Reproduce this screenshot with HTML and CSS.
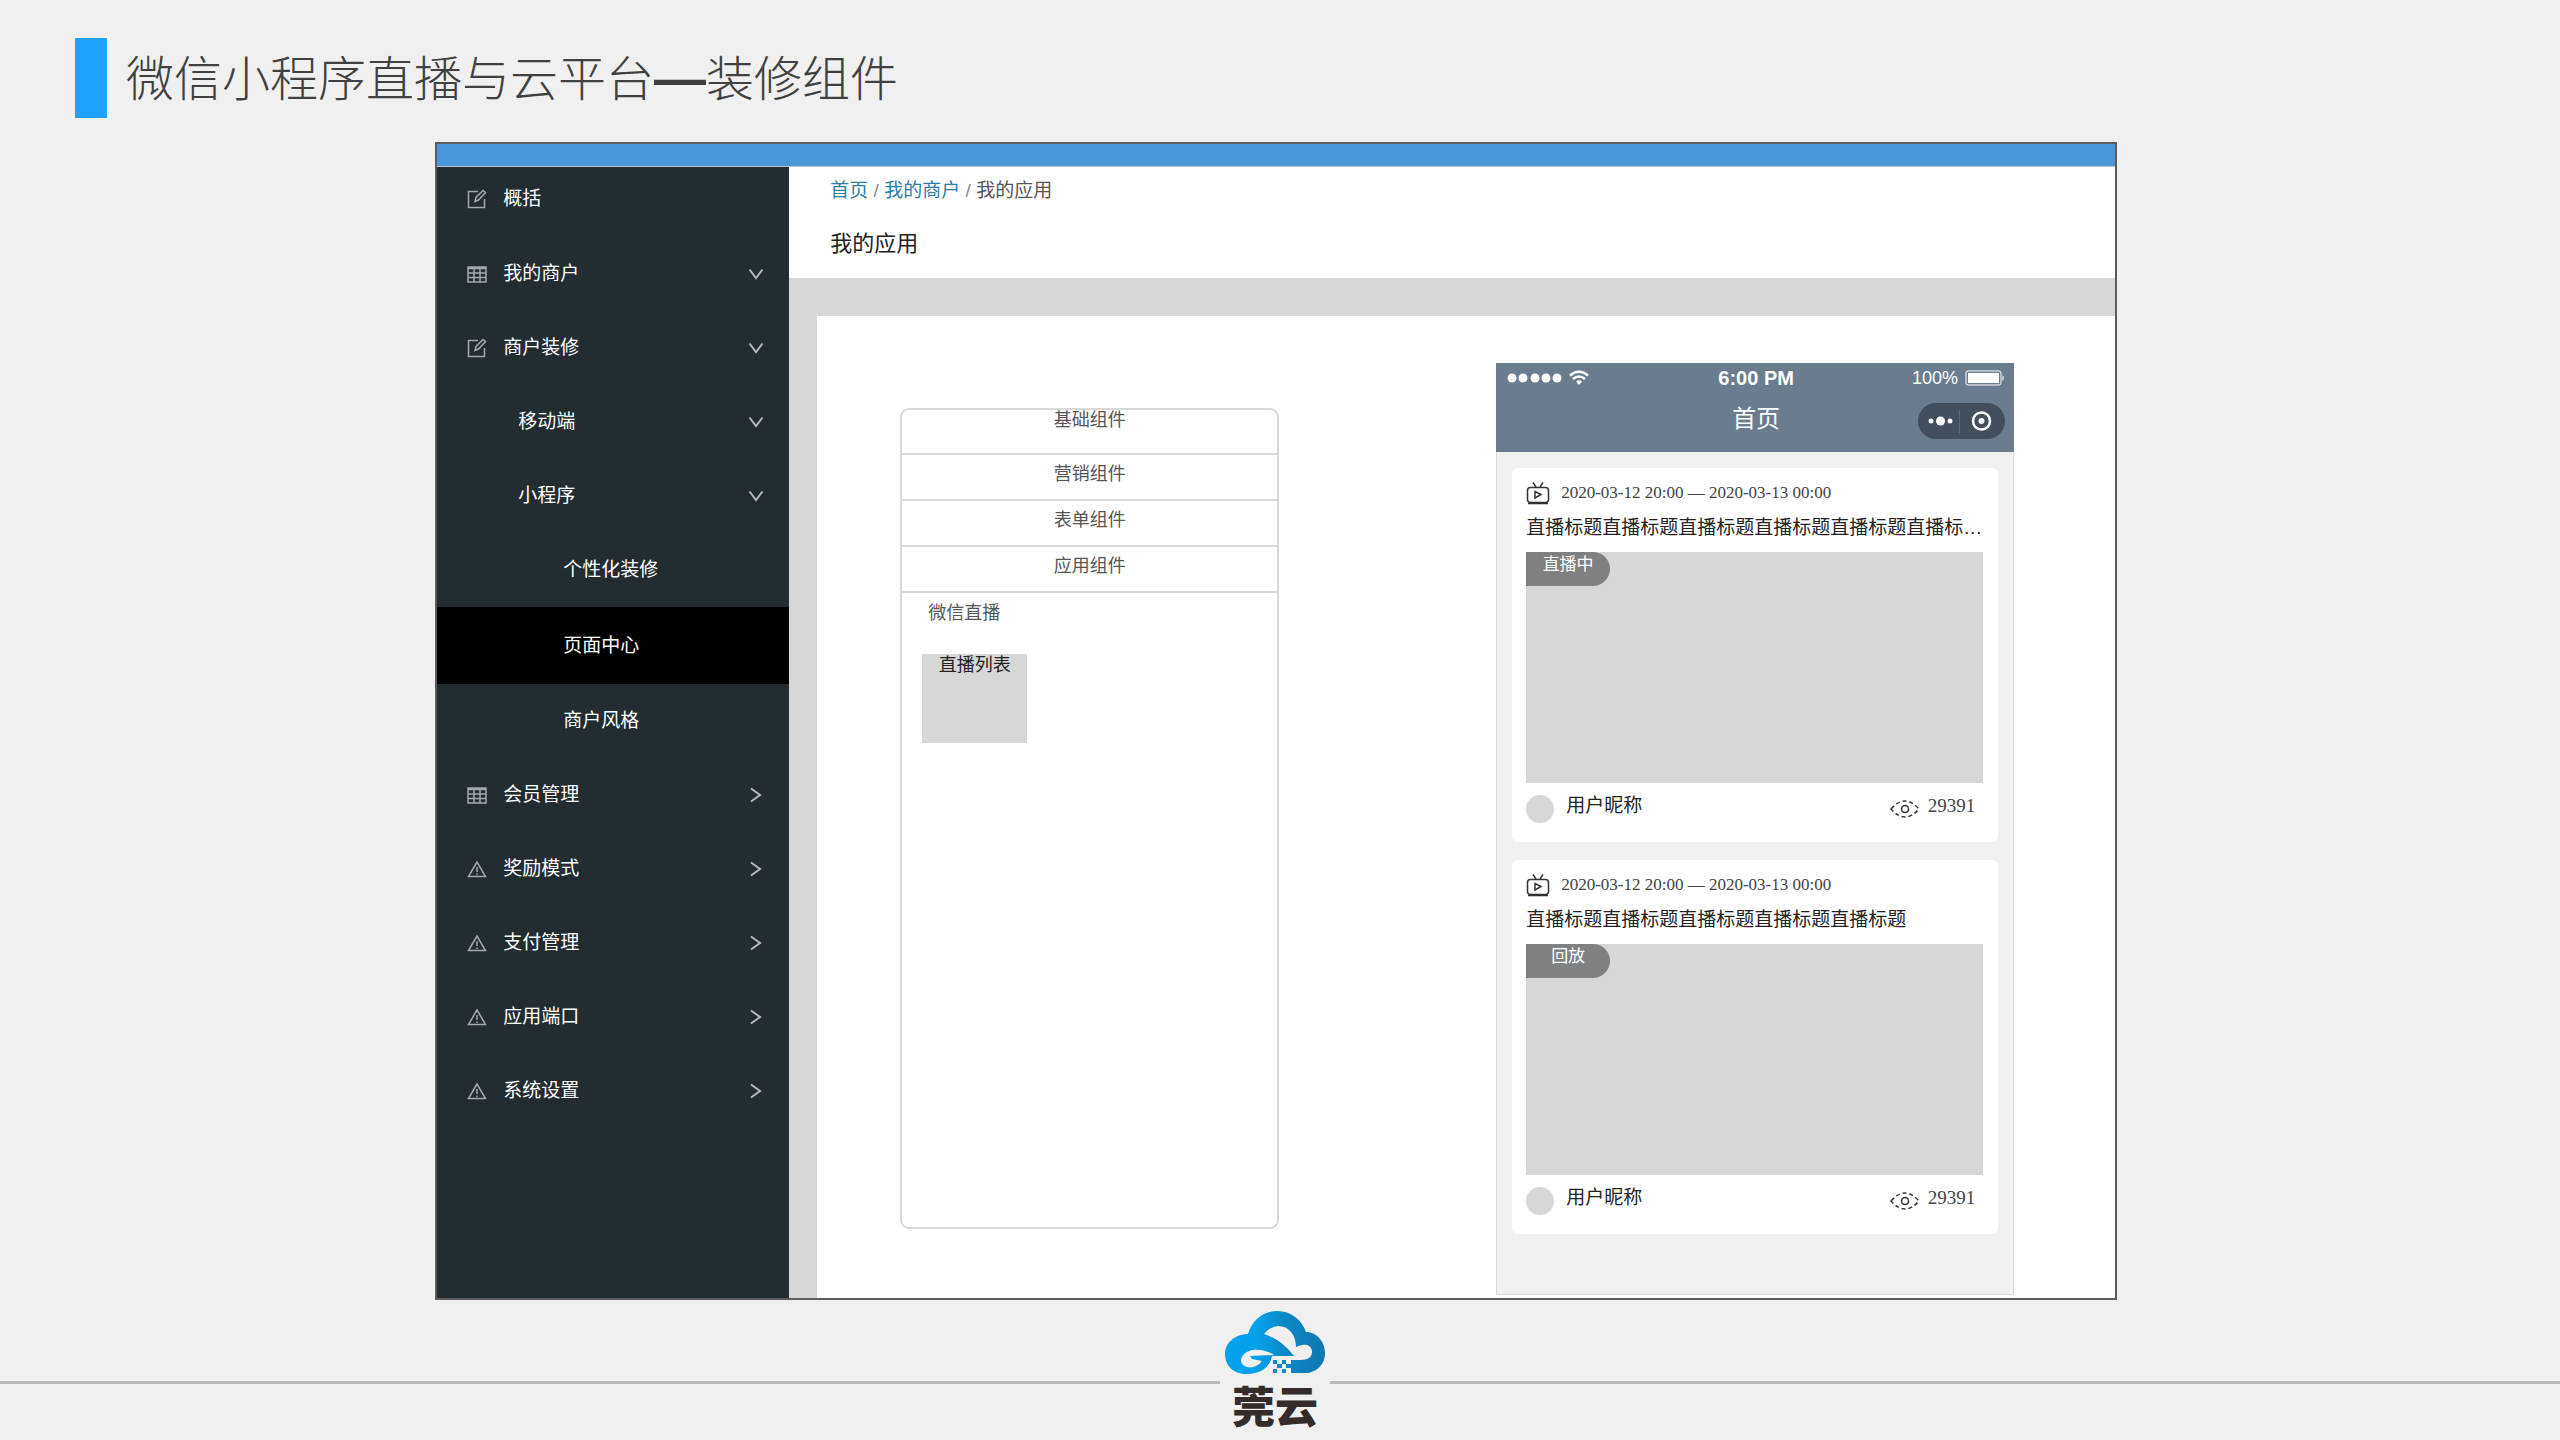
FILE: index.html
```html
<!DOCTYPE html>
<html lang="zh-CN">
<head>
<meta charset="utf-8">
<title>微信小程序直播与云平台—装修组件</title>
<link rel="stylesheet" href="styles.css">
</head>
<body>
<svg class="defs" aria-hidden="true">
  <symbol id="edit" viewBox="0 0 20 20"><path d="M11 2.500H1.500V18.500H17.500V10M8 12.500L9 8.500L16 1.500L18.500 3.500L11.500 11Z"/></symbol>
  <symbol id="grid" viewBox="0 0 20 20"><path d="M1 3H19V18H1ZM1 4.500H19M1 9H19M1 13.500H19M7 3V18M13 3V18"/></symbol>
  <symbol id="warn" viewBox="0 0 20 20"><path d="M10 3L1.500 17.500H18.500ZM10 8V13M10 14.500V16"/></symbol>
  <symbol id="down" viewBox="0 0 16 16"><path d="M1.500 3.500L8 12L14.500 3.500"/></symbol>
  <symbol id="right" viewBox="0 0 16 16"><path d="M3 1.500L12 8L3 14.500"/></symbol>
  <symbol id="tv" viewBox="0 0 24 24"><rect x="1.500" y="6.500" width="21" height="15" rx="3"/><path d="M2 22.500H22M7 1.500L10 6M17 1.500L14 6M9 10.500V17L15 13.500Z"/></symbol>
  <symbol id="eye" viewBox="0 0 30 20"><path stroke-dasharray="4 3" d="M1 10Q15 -6 29 10Q15 26 1 10Z"/><circle cx="15" cy="10" r="3.500"/></symbol>
</svg>

<header class="slide-head">
  <span class="mark"></span>
  <h1>微信小程序直播与云平台<span class="dash">—</span>装修组件</h1>
</header>

<main class="app">
  <div class="topbar"></div>
  <div class="columns">
    <nav class="side">
      <a href="#" class="item"><svg class="ico"><use href="#edit"/></svg>概括</a>
      <a href="#" class="item"><svg class="ico"><use href="#grid"/></svg>我的商户<svg class="arrow"><use href="#down"/></svg></a>
      <a href="#" class="item"><svg class="ico"><use href="#edit"/></svg>商户装修<svg class="arrow"><use href="#down"/></svg></a>
      <a href="#" class="item sub">移动端<svg class="arrow"><use href="#down"/></svg></a>
      <a href="#" class="item sub">小程序<svg class="arrow"><use href="#down"/></svg></a>
      <a href="#" class="item leaf">个性化装修</a>
      <a href="#" class="item leaf active">页面中心</a>
      <a href="#" class="item leaf">商户风格</a>
      <a href="#" class="item"><svg class="ico"><use href="#grid"/></svg>会员管理<svg class="arrow"><use href="#right"/></svg></a>
      <a href="#" class="item"><svg class="ico"><use href="#warn"/></svg>奖励模式<svg class="arrow"><use href="#right"/></svg></a>
      <a href="#" class="item"><svg class="ico"><use href="#warn"/></svg>支付管理<svg class="arrow"><use href="#right"/></svg></a>
      <a href="#" class="item"><svg class="ico"><use href="#warn"/></svg>应用端口<svg class="arrow"><use href="#right"/></svg></a>
      <a href="#" class="item"><svg class="ico"><use href="#warn"/></svg>系统设置<svg class="arrow"><use href="#right"/></svg></a>
    </nav>

    <div class="content">
      <div class="page-head">
        <div class="crumbs"><a href="#">首页</a><span>/</span><a href="#">我的商户</a><span>/</span>我的应用</div>
        <h2>我的应用</h2>
      </div>
      <div class="canvas">
        <section class="parts">
          <button class="part">基础组件</button>
          <button class="part">营销组件</button>
          <button class="part">表单组件</button>
          <button class="part">应用组件</button>
          <div class="group">
            <h3>微信直播</h3>
            <button class="tile">直播列表</button>
          </div>
        </section>

        <section class="phone">
          <div class="phone-head">
            <div class="status">
              <svg class="signal" viewBox="0 0 80 20"><circle cx="5" cy="10" r="4.500"/><circle cx="16" cy="10" r="4.500"/><circle cx="28" cy="10" r="4.500"/><circle cx="39" cy="10" r="4.500"/><circle cx="50" cy="10" r="4.500"/><path class="wave" d="M63 7.500Q72 0 81 7.500M66 11Q72 6 78 11"/><path d="M69 13.500Q72 11 75 13.500L72 17Z"/></svg>
              <b class="clock">6:00 PM</b>
              <span class="power">100%<svg class="battery" viewBox="0 0 40 16"><rect class="shell" x="1" y="1" width="35" height="14" rx="2"/><rect x="3" y="3" width="31" height="10"/><path d="M37.500 5Q40 8 37.500 11Z"/></svg></span>
            </div>
            <div class="titlebar">
              <span class="page-name">首页</span>
              <svg class="capsule" viewBox="0 0 87 36"><rect width="87" height="36" rx="18" fill="#434f5c"/><circle cx="13" cy="18" r="2.500"/><circle cx="22.500" cy="18" r="4.500"/><circle cx="32" cy="18" r="2.500"/><path d="M41.500 7V31" stroke="#5c6977"/><circle cx="63.500" cy="18" r="8.500" fill="none" stroke="#fff" stroke-width="2.500"/><circle cx="63.500" cy="18" r="3"/></svg>
            </div>
          </div>
          <div class="feed">
            <article class="card">
              <div class="time"><svg class="tv"><use href="#tv"/></svg>2020-03-12 20:00 — 2020-03-13 00:00</div>
              <h4>直播标题直播标题直播标题直播标题直播标题直播标…</h4>
              <div class="cover"><span class="tag">直播中</span></div>
              <div class="meta"><i class="avatar"></i><span>用户昵称</span><svg class="eye"><use href="#eye"/></svg><span class="views">29391</span></div>
            </article>
            <article class="card">
              <div class="time"><svg class="tv"><use href="#tv"/></svg>2020-03-12 20:00 — 2020-03-13 00:00</div>
              <h4>直播标题直播标题直播标题直播标题直播标题</h4>
              <div class="cover"><span class="tag">回放</span></div>
              <div class="meta"><i class="avatar"></i><span>用户昵称</span><svg class="eye"><use href="#eye"/></svg><span class="views">29391</span></div>
            </article>
          </div>
        </section>
      </div>
    </div>
  </div>
</main>

<footer class="slide-foot">
  <div class="brand">
    <svg class="cloud" viewBox="0 0 100 64">
      <defs><linearGradient id="sky"><stop offset=".3" stop-color="#03a2ed"/><stop offset=".6" stop-color="#0b88c6"/><stop offset="1" stop-color="#0f76ae"/></linearGradient></defs>
      <path fill="url(#sky)" fill-rule="evenodd" d="M23 23C27 9 38 0 52 0C66 0 77 9 81 21C92 21 100 31 100 42C100 54 91 62 80 62H66V49H75C83 49 87 46 87 41C87 35 82 33 77 34Q73 35 71 36C71 24 64 15 53 15Q44 16 39 23Q56 28 69 45H47C45 56 36 63 21 63C8 63 0 54 0 43C0 32 10 23 23 23ZM49 44C42 39 34 38 27 39C19 41 16 46 16 50C17 56 25 58 31 55Q35 53 37 50L27 48L25 45Z"/>
      <path fill="#0b88c6" d="M48 49h4v4h-4zM57 49h4v4h-4zM52 53h5v4h-5zM61 53h5v4h-5zM48 58h4v4h-4zM57 58h4v4h-4z"/>
    </svg>
    <strong>莞云</strong>
  </div>
</footer>
</body>
</html>
```
FILE: styles.css
```css
* { box-sizing: border-box; }

body {
  margin: 0;
  min-height: 100vh;
  display: flex;
  flex-direction: column;
  background: #f0f0f0;
  color: #333;
  font-family: "Liberation Sans", "Noto Sans CJK SC", sans-serif;
  font-size: 19px;
  line-height: 28px;
}

h1, h2, h3, h4 { margin: 0; font-weight: 400; }
a { color: inherit; text-decoration: none; }
button { border: 0; padding: 0; font: inherit; color: inherit; }
svg { display: block; flex: none; }
.defs { position: absolute; width: 0; height: 0; }

.slide-head {
  display: flex;
  align-items: flex-start;
  gap: 19px;
  padding: 38px 75px 24px;
}
.mark { width: 32px; height: 80px; background: #1fa1ff; }
h1 {
  font-size: 48px;
  line-height: 74px;
  font-weight: 200;
  font-family: "Noto Sans CJK SC", sans-serif;
  color: #404040;
}
.dash { font: bold 52px "Liberation Sans", sans-serif; }

/* application window */
.app {
  flex: 1;
  display: flex;
  flex-direction: column;
  margin: 0 17.300% 0 17%;
  border: 2px solid #5c5c5c;
  background: #fff;
}
.topbar { height: 23px; background: #4b97d8; border-bottom: 1px solid #b9c9d4; }
.columns { flex: 1; display: flex; }

.side {
  width: 352px;
  padding-bottom: 160px;
  background: #222c31;
  color: #fff;
}
.item {
  display: flex;
  align-items: center;
  height: 74px;
  padding: 0 25px 0 30px;
}
.item:first-child { height: 70px; padding-bottom: 6px; }
.ico {
  width: 20px;
  height: 20px;
  margin-right: 16px;
  fill: none;
  stroke: #a3a9ac;
  stroke-width: 1.500;
}
.arrow {
  width: 16px;
  height: 16px;
  margin-left: auto;
  fill: none;
  stroke: #b4babd;
  stroke-width: 2;
}
.sub { padding-left: 81px; }
.leaf { padding-left: 126px; }
.active { height: 77px; background: #000; }

.content { flex: 1; display: flex; flex-direction: column; background: #d7d7d7; }
.page-head { height: 111px; padding: 10px 41px; background: #fff; }
.crumbs { display: flex; color: #555; }
.crumbs a { color: #2c7da8; }
.crumbs span { width: 16px; text-align: center; color: #888; }
h2 { margin-top: 23px; font-size: 22px; line-height: 32px; color: #222; }

.canvas {
  flex: 1;
  display: flex;
  align-items: flex-start;
  justify-content: space-between;
  margin: 38px 0 0 28px;
  padding: 47px 101px 0 83px;
  background: #fff;
}

/* component palette */
.parts {
  display: flex;
  flex-direction: column;
  width: 379px;
  height: 821px;
  margin-top: 45px;
  border: 2px solid #d9d9d9;
  border-radius: 9px;
  font-size: 18px;
  color: #555;
}
.part {
  height: 46px;
  padding-bottom: 6px;
  border-bottom: 2px solid #d9d9d9;
  background: none;
}
.part:first-child { height: 45px; padding-bottom: 26px; line-height: 20px; }
.group { padding: 6px 20px; }
.group h3 { padding-left: 6px; font-size: 18px; }
.tile {
  width: 105px;
  height: 89px;
  margin-top: 27px;
  padding-bottom: 68px;
  background: #d7d7d7;
  color: #222;
  line-height: 20px;
}

/* phone preview */
.phone {
  width: 518px;
  border: 1px solid #d9d9d9;
  background: #f1f1f1;
}
.phone-head {
  height: 89px;
  margin: -1px -1px 0;
  padding: 4px 9px 0 11px;
  background: #6a7c8e;
  color: #fff;
}
.status, .titlebar { display: grid; grid-template-columns: 1fr auto 1fr; align-items: center; }
.status { height: 22px; line-height: 22px; }
.signal { width: 80px; height: 20px; overflow: visible; fill: #fff; }
.wave { fill: none; stroke: #fff; stroke-width: 2.500; }
.clock { font-size: 20px; }
.power { display: flex; justify-content: flex-end; align-items: center; gap: 7px; font-size: 18px; }
.battery { width: 40px; height: 16px; fill: #fff; }
.battery .shell { fill: none; stroke: #fff; }
.titlebar { height: 36px; margin-top: 14px; }
.page-name { grid-column: 2; padding-bottom: 5px; font-size: 24px; }
.capsule { width: 87px; height: 36px; justify-self: end; fill: #fff; }

.feed { display: grid; gap: 18px; padding: 16px 15px 60px; }
.card {
  height: 374px;
  padding: 10px 15px 0 14px;
  border-radius: 6px;
  background: #fff;
}
.time {
  display: flex;
  align-items: center;
  gap: 11px;
  height: 30px;
  font: 17px "Liberation Serif", serif;
  color: #444;
}
.tv, .eye { fill: none; stroke: #333; stroke-width: 1.500; }
.tv { width: 24px; height: 24px; }
h4 { padding-top: 6px; font-size: 19px; white-space: nowrap; color: #222; }
.cover { height: 231px; margin-top: 10px; background: #d7d7d7; }
.tag {
  display: block;
  width: 84px;
  height: 34px;
  border-radius: 0 17px 17px 0;
  background: #808080;
  color: #fff;
  font-size: 17px;
  line-height: 26px;
  text-align: center;
}
.meta { display: flex; align-items: center; height: 46px; color: #222; }
.avatar {
  width: 28px;
  height: 28px;
  margin: 6px 12px 0 0;
  border-radius: 50%;
  background: #d7d7d7;
}
.eye { width: 30px; height: 20px; margin: 6px 8px 0 auto; }
.views { padding-right: 8px; font-family: "Liberation Serif", serif; color: #444; }

/* brand strip */
.slide-foot {
  display: flex;
  justify-content: center;
  align-items: flex-start;
  gap: 5px;
  height: 140px;
  padding-top: 11px;
}
.slide-foot::before, .slide-foot::after {
  content: "";
  flex: 1215 0 0;
  height: 3px;
  margin-top: 70px;
  background: #b9b9b9;
}
.slide-foot::after { flex-grow: 1225; }
.brand { width: 100px; }
.cloud { width: 100px; height: 64px; }
.brand strong {
  display: block;
  margin-top: 4px;
  font-family: "Noto Sans CJK SC", sans-serif;
  font-size: 43px;
  font-weight: 900;
  line-height: 50px;
  text-align: center;
  color: #362b2b;
}
```
